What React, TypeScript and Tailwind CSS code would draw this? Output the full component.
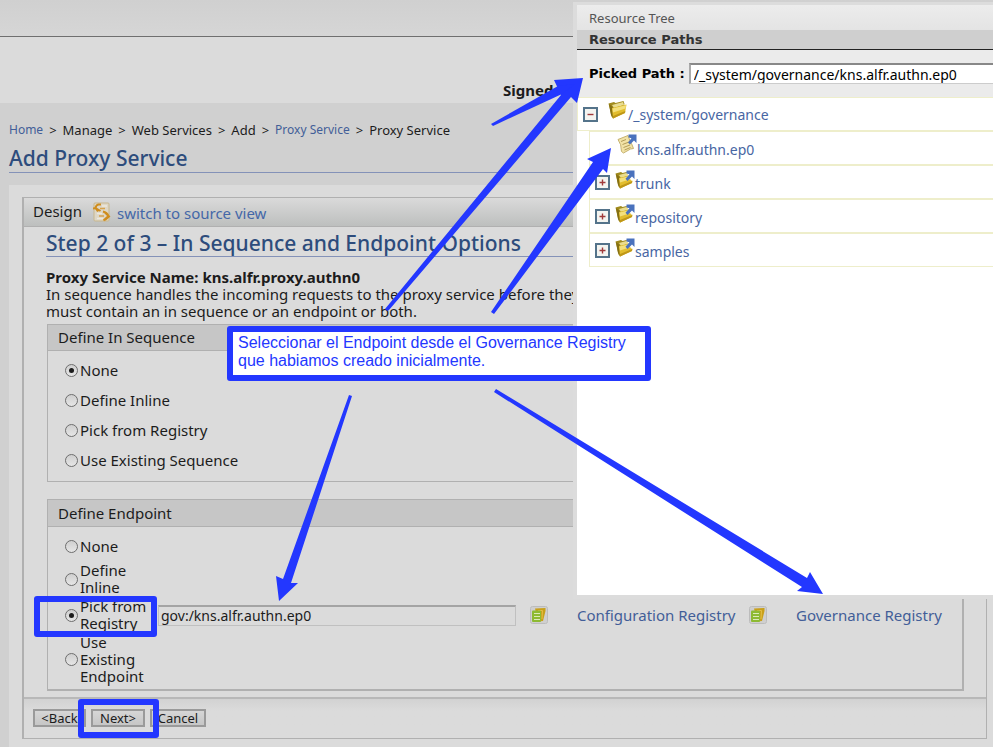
import React from "react";

function RadioOption({
  name,
  label,
  checked,
  narrow,
}: {
  name: string;
  label: string;
  checked?: boolean;
  narrow?: boolean;
}) {
  return (
    <label className="flex items-center gap-[2px] leading-[17px]">
      <input
        type="radio"
        name={name}
        defaultChecked={checked}
        className="grid size-[13px] shrink-0 appearance-none place-items-center rounded-full border border-[#6e6e6e] bg-linear-to-b from-[#cfcfcf] to-[#e6e6e6] before:size-[5px] before:rounded-full checked:before:bg-[#1c1c1c]"
      />
      <span className={narrow ? "w-[70px]" : ""}>{label}</span>
    </label>
  );
}

function SourceIcon() {
  return (
    <svg width="18" height="20" viewBox="0 0 18 20" aria-hidden="true">
      <rect x="1" y="1" width="15" height="18" rx="1" fill="#ded7c6" stroke="#c8b78e" />
      <path d="M8 2.500H5.500Q3 3 2.500 6M5 9.500 2.500 6 0 6.500M2.500 6 7.500 9" fill="none" stroke="#cf8d1e" strokeWidth="2" />
      <path d="M10 9.500q4 1 5.500 4.500M10.500 18.500 15.500 14M12 10.500l4 4-4 3.500" fill="none" stroke="#cf8d1e" strokeWidth="2" />
      <path d="M7 6.500h5M6 14h5" stroke="#d8a24c" strokeWidth="1.500" />
      <path d="M9 4h5M4 11.500h5M4 16.500h6" stroke="#ece8de" strokeWidth="1.500" />
    </svg>
  );
}

function RegistryIcon() {
  return (
    <svg width="18" height="18" viewBox="0 0 18 18" aria-hidden="true" className="shrink-0">
      <rect x="0.500" y="0.500" width="17" height="17" rx="2" fill="#cfcfcf" stroke="#bcbcbc" />
      <path d="M5 2.500 15.500 2v3L13 15l-5 .500z" fill="#c9a01a" />
      <path d="M8 4.500h4.500L12 13" fill="none" stroke="#e3bf45" />
      <rect x="2" y="4.500" width="9" height="11.500" rx="1" fill="#8dba32" />
      <path d="M4 7.500h6M4 10.500h6M4 13.500h6" stroke="#dbeab8" strokeWidth="1.200" />
    </svg>
  );
}

function FolderIcon({ link }: { link?: boolean }) {
  return (
    <svg width="20" height="20" viewBox="0 0 20 20" aria-hidden="true" className="shrink-0">
      <path d="M.500 3.500 6 2l1.500 1L15.500 1l1 3-4 10-7.500 4.500-1.500-2z" fill="#a08a1c" />
      <path d="M1 4 4.500 7 5.500 18 3 15z" fill="#857013" />
      <path d="M4 5 15 2l1 3-10 3z" fill="#e9dc90" />
      <path d="M4 8 18.500 4.500 17 13 5 18.500z" fill="#e2bd2e" />
      <path d="M4.500 8.500 18 5.200 17.500 8.500 5 12.500z" fill="#f3e07c" />
      <path d="M5 18.500 17 13l.300-2L5 16z" fill="#bf9718" />
      {link && (
        <>
          <path d="M10.500 0H20v11l-4-.500z" fill="#ffffff" />
          <path d="M11.500.500H19.500v8.500L17 6.500 12.500 11 10.500 8.700 14.500 4.200 11.500 3.500z" fill="#4a72bd" />
        </>
      )}
    </svg>
  );
}

function DocumentIcon() {
  return (
    <svg width="20" height="20" viewBox="0 0 20 20" aria-hidden="true" className="shrink-0">
      <path d="M1 5.500 11 1.500q1.500 5 3.500 8l2 5-3 .500-7 4-2-1.500Q4.500 10 1 5.500z" fill="#f1e2a6" stroke="#c6b270" />
      <path d="M4 7.500l5-2M5.500 10.500l6.500-2.500M6.500 13.500l6.500-2.500M7.500 16l6-2.500" stroke="#b39c58" />
      <path d="M11 0h9v11l-4-1z" fill="#ffffff" />
      <path d="M11.500.500H19.500v8.500L17 6.500 13 10.500 11 8.500 14.500 4.200 11.500 3.500z" fill="#4a72bd" />
    </svg>
  );
}

function Toggle({ open }: { open?: boolean }) {
  return (
    <button
      type="button"
      aria-label={open ? "Collapse" : "Expand"}
      className="size-[15px] shrink-0 border-2 border-[#54738a] bg-[#f4f4f0]"
    >
      <svg viewBox="0 0 11 11" className="block size-[11px]" aria-hidden="true">
        <path d={open ? "M2.500 5.500h6" : "M2.500 5.500h6M5.500 2.500v6"} stroke="#a03a3a" strokeWidth="1.400" />
      </svg>
    </button>
  );
}

function Branch({ name }: { name: string }) {
  return (
    <li className="flex h-[34px] items-center border-y border-l border-[#eeeecb] pl-[5px]">
      <Toggle />
      <span className="ml-[5px] pb-1">
        <FolderIcon link />
      </span>
      <a href="#" className="pt-[2px]">
        {name}
      </a>
    </li>
  );
}

function ResourceTree() {
  return (
    <section className="absolute top-[2px] right-0 left-[573px] border-t-[3px] border-b-4 border-l-4 border-[#dcdcdc] bg-white">
      <div className="h-[25px] bg-linear-to-b from-[#ececec] to-[#e4e4e4] pl-3 text-[13px] leading-[26px] text-[#555]">
        Resource Tree
      </div>
      <h2 className="h-5 border-b border-[#222] bg-[#cfcfcf] pl-3 font-['DejaVu_Sans',sans-serif] text-[13px] leading-5 font-bold text-[#333]">
        Resource Paths
      </h2>
      <div className="flex h-[47px] items-center overflow-hidden bg-[#ebebeb] pl-3">
        <label htmlFor="picked" className="shrink-0 font-['DejaVu_Sans',sans-serif] text-[13px] font-bold text-black">
          Picked Path :
        </label>
        <input
          id="picked"
          defaultValue="/_system/governance/kns.alfr.authn.ep0"
          className="ml-1 h-[21px] min-w-0 flex-1 border-t-2 border-b border-l-2 border-t-[#888] border-b-[#ccc] border-l-[#aaa] bg-white pl-[3px] text-[14px] text-black"
        />
      </div>
      <div className="h-[498px] text-[14px] text-[#4866a3]">
        <div className="flex h-[34px] items-center border-y border-l border-[#eeeecb] pl-[5px]">
          <Toggle open />
          <span className="ml-[10px] pb-2">
            <FolderIcon />
          </span>
          <a href="#">/_system/governance</a>
        </div>
        <ul className="ml-3">
          <li className="flex h-[34px] items-center border-y border-l border-[#eeeecb] pl-[27px]">
            <span className="pb-2">
              <DocumentIcon />
            </span>
            <a href="#" className="pt-[2px]">
              kns.alfr.authn.ep0
            </a>
          </li>
          <Branch name="trunk" />
          <Branch name="repository" />
          <Branch name="samples" />
        </ul>
      </div>
    </section>
  );
}

function Annotations() {
  return (
    <>
      <svg className="pointer-events-none absolute top-0 left-0" width="993" height="747" fill="#2337ff" aria-hidden="true">
        <path d="M385 309 561 95 554 80 583 78 577 103 571 97 389 310Q387 312 385 309z" />
        <path d="M491 124 558 86 575 84 562 94 493 126z" />
        <path d="M491 312 593 162 587 159 611 148 607 173 603 169 494 314z" />
        <path d="M349 395 283 579 276 576 279 601 298 583 291 583 352 396z" />
        <path d="M496 389 807 578 810 572 823 594 797 591 802 587 494 392z" />
      </svg>
      <p className="absolute top-[326px] left-[227px] h-[55px] w-[424px] rounded-[3px] border-[6px] border-[#2337ff] bg-white pt-[2px] pl-[5px] font-['Liberation_Sans',Arial,sans-serif] text-[16px] leading-[18px] whitespace-nowrap text-[#2337ff]">
        Seleccionar el Endpoint desde el Governance Registry
        <br />
        que habiamos creado inicialmente.
      </p>
      <div className="pointer-events-none absolute top-[596px] left-[34px] h-[41px] w-[123px] rounded-[3px] border-[6px] border-[#2337ff]" />
      <div className="pointer-events-none absolute top-[699px] left-[78px] h-[39px] w-[81px] rounded-[3px] border-[6px] border-[#2337ff]" />
    </>
  );
}

const buttonClass =
  "h-[18px] border-2 border-[#9a9a9a] bg-linear-to-b from-[#d6d6d6] to-[#c6c6c6] text-[13px] leading-[14px]";

export default function App() {
  return (
    <div className="relative min-h-screen overflow-hidden bg-[#d0d0d0] font-['Noto_Sans','Lucida_Grande',sans-serif] text-[15px] text-[#1c1c1c]">
      <header>
        <div className="h-[37px] border-b border-[#6f6f6f] bg-linear-to-b from-[#d0d0d0] to-[#d6d6d6]" />
        <div className="flex h-[66px] items-end bg-[#dbdbdb] pb-[2px] pl-[503px] font-bold">Signed</div>
      </header>
      <main className="pt-[17px] pl-[9px]">
        <nav className="flex items-center gap-[6px] text-[13px] leading-5">
          <a href="#" className="text-[12px] text-[#425e98]">Home</a>
          <span>&gt;</span>
          <span>Manage</span>
          <span>&gt;</span>
          <span>Web Services</span>
          <span>&gt;</span>
          <span>Add</span>
          <span>&gt;</span>
          <a href="#" className="text-[12px] text-[#425e98]">Proxy Service</a>
          <span>&gt;</span>
          <span>Proxy Service</span>
        </nav>
        <h1 className="h-[33px] border-b border-[#8492b8] text-[21px] leading-9 font-medium text-[#2d4c7c]">Add Proxy Service</h1>
        <div className="mt-3 bg-[#dbdbdb] pt-3 pr-[6px] pb-[9px] pl-[13px]">
          <div className="border border-l-2 border-[#b0b0b0]">
            <div className="flex h-[29px] items-center border-b border-[#b0b0b0] bg-linear-to-b from-[#dadada] to-[#bdbfbe] pl-[9px]">
              <span className="pb-[2px]">Design</span>
              <span className="ml-[11px]">
                <SourceIcon />
              </span>
              <a href="#" className="ml-[6px] pt-[2px] text-[#4467a8]">switch to source view</a>
            </div>
            <div className="pr-[22px] pb-[6px] pl-[22px]">
              <h2 className="h-[30px] border-b border-[#8492b8] text-[21px] leading-8 font-medium text-[#2d4c7c]">
                Step 2 of 3 – In Sequence and Endpoint Options
              </h2>
              <div className="mt-3 mb-1 leading-[17px] whitespace-nowrap">
                <p className="font-bold">Proxy Service Name: kns.alfr.proxy.authn0</p>
                <p>
                  In sequence handles the incoming requests to the proxy service before they
                  <br />
                  must contain an in sequence or an endpoint or both.
                </p>
              </div>
              <section className="ml-px border border-[#b0b0b0]">
                <h3 className="h-[26px] border-b border-[#b0b0b0] bg-[#c6c6c6] pl-[10px] leading-6">Define In Sequence</h3>
                <div className="grid auto-rows-[30px] pt-1 pb-[6px] pl-[17px]">
                  <RadioOption name="sequence" label="None" checked />
                  <RadioOption name="sequence" label="Define Inline" />
                  <RadioOption name="sequence" label="Pick from Registry" />
                  <RadioOption name="sequence" label="Use Existing Sequence" />
                </div>
              </section>
              <section className="mt-[17px] ml-px border border-r-2 border-b-2 border-[#b0b0b0]">
                <h3 className="h-[27px] border-b border-[#b0b0b0] bg-[#c6c6c6] pl-[10px] leading-[26px]">Define Endpoint</h3>
                <div className="grid grid-rows-[30px_36px_36px_52px] items-center pt-1 pb-1 pl-[17px]">
                  <RadioOption name="endpoint" label="None" narrow />
                  <RadioOption name="endpoint" label="Define Inline" narrow />
                  <div className="flex items-center">
                    <RadioOption name="endpoint" label="Pick from Registry" checked narrow />
                    <input
                      aria-label="Endpoint key"
                      defaultValue="gov:/kns.alfr.authn.ep0"
                      className="ml-2 h-[21px] w-[358px] border border-t-2 border-[#c0c0c0] border-t-[#a4a4a4] pl-[2px] text-[14px]"
                    />
                    <span className="ml-[14px] w-[47px]">
                      <RegistryIcon />
                    </span>
                    <a href="#" className="w-[172px] text-[#425e98]">Configuration Registry</a>
                    <span className="w-[47px]">
                      <RegistryIcon />
                    </span>
                    <a href="#" className="text-[#425e98]">Governance Registry</a>
                  </div>
                  <RadioOption name="endpoint" label="Use Existing Endpoint" narrow />
                </div>
              </section>
            </div>
            <div className="flex h-[41px] items-center gap-[5px] border-t-2 border-[#b8b8b8] bg-linear-to-b from-[#d2d2d2] to-[#dbdbdb] to-30% pb-[2px] pl-[9px]">
              <button type="button" className={`${buttonClass} w-[53px]`}>&lt;Back</button>
              <button type="button" className={`${buttonClass} w-[54px]`}>Next&gt;</button>
              <button type="button" className={`${buttonClass} w-[56px]`}>Cancel</button>
            </div>
          </div>
        </div>
      </main>
      <ResourceTree />
      <Annotations />
    </div>
  );
}
